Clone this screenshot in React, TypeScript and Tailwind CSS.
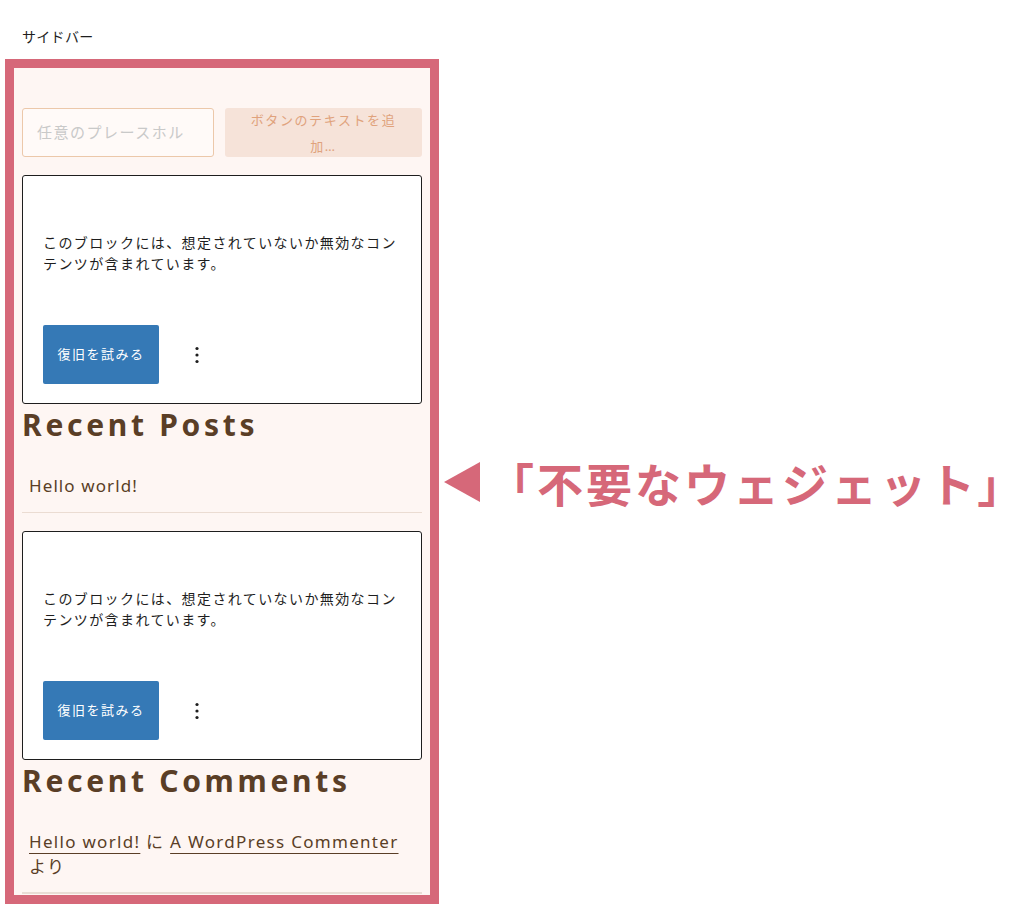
const jp = "font-['Noto_Sans','Noto_Sans_CJK_JP',sans-serif]"

const InvalidBlock = () => (
  <div className="rounded-[3px] border border-[#1e1e1e] bg-white px-[20px] pb-[19px] pt-[56px]">
    <p className="text-[14px] leading-[21px] tracking-[1.4px] text-[#1e1e1e]">
      このブロックには、想定されていないか無効なコンテンツが含まれています。
    </p>
    <div className="mt-[51px] flex items-center gap-[30px]">
      <button className="h-[59px] w-[116px] rounded-[2px] bg-[#3579b6] text-[13px] tracking-[1.5px] text-white">
        復旧を試みる
      </button>
      <svg width="16" height="20" viewBox="0 0 16 20" className="text-[#1e1e1e]">
        <circle cx="8" cy="3.5" r="1.6" fill="currentColor" />
        <circle cx="8" cy="10" r="1.6" fill="currentColor" />
        <circle cx="8" cy="16.5" r="1.6" fill="currentColor" />
      </svg>
    </div>
  </div>
)

const Heading = ({ children }: { children: string }) => (
  <h2 className="pt-[3px] text-[30px] font-bold leading-[36px] tracking-[3.7px] text-[#5a3e26]">{children}</h2>
)

export default function App() {
  return (
    <div className={`${jp} min-h-[912px] w-[1012px] bg-white pt-[27px]`}>
      <div className="pl-[22px] text-[14px] leading-[20px] tracking-[0.3px] text-[#1e1e1e]">サイドバー</div>

      <div className="mt-[12px] flex items-center pl-[5px]">
        {/* サイドバー枠 */}
        <div className="w-[434px] shrink-0 border-[9px] border-[#d66879] bg-[#fef6f3] px-[8px] pb-[1px] pt-[40px]">
          <div className="flex gap-[11px]">
            <div className="flex h-[49px] w-[192px] items-center rounded-[3px] border border-[#ecc8aa] bg-[#fffaf8] px-[14px] text-[15px] tracking-[1.5px] text-[#c9c9c9]">
              任意のプレースホル
            </div>
            <button className="flex h-[49px] flex-1 items-center justify-center rounded-[3px] bg-[#f6e3d9] text-center text-[13px] leading-[26px] tracking-[1.6px] text-[#e0a27c]">
              ボタンのテキストを追
              <br />
              加…
            </button>
          </div>

          <div className="mt-[18px]">
            <InvalidBlock />
          </div>

          <Heading>Recent Posts</Heading>
          <ul className="mt-[20px]">
            <li className="border-b border-[#ebdcd2] pb-[13px] pl-[7px] pt-[10px] text-[17px] leading-[26px] tracking-[1.1px] text-[#5a3e26]">
              Hello world!
            </li>
          </ul>

          <div className="mt-[18px]">
            <InvalidBlock />
          </div>

          <Heading>Recent Comments</Heading>
          <ul className="mt-[20px]">
            <li className="border-b-2 border-[#e9ddd5] pb-[13px] pl-[7px] pt-[10px] text-[17px] leading-[25px] tracking-[1.3px] text-[#5a3e26]">
              <a className="underline decoration-1 underline-offset-[5px]">Hello world!</a> に{' '}
              <a className="underline decoration-1 underline-offset-[5px]">A WordPress Commenter</a> より
            </li>
          </ul>
        </div>

        {/* 注記 */}
        <div className="ml-[5px] flex items-center whitespace-nowrap">
          <svg width="36" height="40" viewBox="0 0 36 40" className="shrink-0">
            <polygon points="36,0 36,40 0,20" fill="#d66879" />
          </svg>
          <span className="ml-[8px] font-['Noto_Sans_CJK_JP',sans-serif] text-[46px] font-bold leading-none tracking-[3px] text-[#d66879]">
            「不要なウェジェット
            <span className="tracking-normal [font-feature-settings:'palt']">」</span>
          </span>
        </div>
      </div>
    </div>
  )
}
